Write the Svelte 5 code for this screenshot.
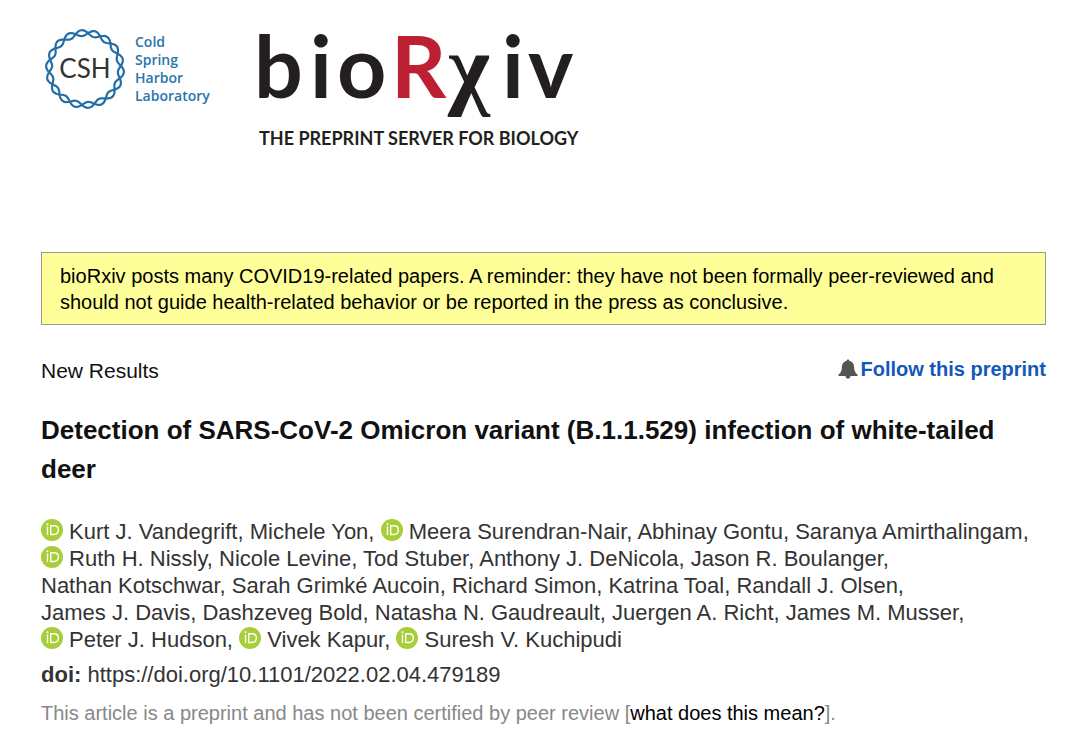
<script lang="ts">
  type Author = { name: string; orcid?: boolean };

  const authors: Author[] = [
    { name: 'Kurt J. Vandegrift', orcid: true },
    { name: 'Michele Yon' },
    { name: 'Meera Surendran-Nair', orcid: true },
    { name: 'Abhinay Gontu' },
    { name: 'Saranya Amirthalingam' },
    { name: 'Ruth H. Nissly', orcid: true },
    { name: 'Nicole Levine' },
    { name: 'Tod Stuber' },
    { name: 'Anthony J. DeNicola' },
    { name: 'Jason R. Boulanger' },
    { name: 'Nathan Kotschwar' },
    { name: 'Sarah Grimké Aucoin' },
    { name: 'Richard Simon' },
    { name: 'Katrina Toal' },
    { name: 'Randall J. Olsen' },
    { name: 'James J. Davis' },
    { name: 'Dashzeveg Bold' },
    { name: 'Natasha N. Gaudreault' },
    { name: 'Juergen A. Richt' },
    { name: 'James M. Musser' },
    { name: 'Peter J. Hudson', orcid: true },
    { name: 'Vivek Kapur', orcid: true },
    { name: 'Suresh V. Kuchipudi', orcid: true }
  ];

  // one strand of the helix ring, phase 0 or PI
  function strand(phase: number) {
    const points: string[] = [];
    for (let deg = 0; deg < 360; deg += 2) {
      const a = (deg * Math.PI) / 180;
      const r = 36 + 3 * Math.sin(a * 9 + phase);
      points.push(`${(41 + r * Math.cos(a)).toFixed(2)},${(41 + r * Math.sin(a)).toFixed(2)}`);
    }
    return points.join(' ');
  }
</script>

<div class="page">
  <header>
    <a class="csh" href="#cshl">
      <svg width="82" height="82" viewBox="0 0 82 82" aria-hidden="true">
        <polygon points={strand(0.8)} />
        <polygon points={strand(0.8 + Math.PI)} />
        <text x="41" y="50" text-anchor="middle">CSH</text>
      </svg>
      <span>Cold<br />Spring<br />Harbor<br />Laboratory</span>
    </a>
    <a class="biorxiv" href="#home" aria-label="bioRxiv">
      <svg width="322" height="124" viewBox="0 0 322 124">
        <g class="wordmark">
          <text x="-3" y="71">b</text>
          <text x="53" y="71">i</text>
          <text x="80" y="71">o</text>
          <text class="red" x="134" y="71">R</text>
          <text class="chi" x="191" y="71">χ</text>
          <text x="245" y="71">i</text>
          <text x="271" y="71">v</text>
        </g>
        <text class="tagline" x="2" y="118">THE PREPRINT SERVER FOR BIOLOGY</text>
      </svg>
    </a>
  </header>

  <main>
    <p class="notice">
      bioRxiv posts many COVID19-related papers. A reminder: they have not been formally peer-reviewed and
      should not guide health-related behavior or be reported in the press as conclusive.
    </p>

    <div class="meta">
      <span>New Results</span>
      <a href="#follow">
        <svg width="20" height="20" viewBox="0 0 20 20" aria-hidden="true">
          <path d="M10 0.5c-1 0-1.5.6-1.4 1.5C5.2 2.7 4 5 3.900 8c-.1 4-1.200 6-3.400 7.500V17h19v-1.500C17.300 14 16.200 12 16.100 8c-.1-3-1.300-5.300-4.700-6 .1-.9-.4-1.500-1.400-1.500zM7.500 17c.3 2 1.200 2.700 2.500 2.700s2.200-.7 2.500-2.700z" />
        </svg>
        Follow this preprint
      </a>
    </div>

    <h1>Detection of SARS-CoV-2 Omicron variant (B.1.1.529) infection of white-tailed deer</h1>

    <p class="authors">
      {#each authors as author, i}
        <span>
          {#if author.orcid}
            <svg width="22" height="22" viewBox="0 0 22 22" role="img" aria-label="ORCID">
              <circle cx="11" cy="11" r="11" />
              <path d="M6.500 7.500v8.500M9.700 6.700h3.300c5.900 0 5.900 8.800 0 8.800h-3.300z" />
              <circle class="dot" cx="6.500" cy="5.200" r="1" />
            </svg>
          {/if}
          {author.name}{i < authors.length - 1 ? ',' : ''}</span>{' '}
      {/each}
    </p>

    <p class="doi"><strong>doi:</strong> https://doi.org/10.1101/2022.02.04.479189</p>
    <p class="note">
      This article is a preprint and has not been certified by peer review [<a href="#about">what does this mean?</a>].
    </p>
  </main>
</div>

<style>
  :global(body) {
    margin: 0;
    background: #fff;
  }

  .page {
    padding: 27px 32px 12px 41px;
    font-family: 'Liberation Sans', Arial, sans-serif;
    color: #333;
  }

  p,
  h1 {
    margin: 0;
  }

  a {
    text-decoration: none;
  }

  header {
    display: flex;
    gap: 44px;
    margin-left: 3px;
  }

  .csh {
    display: flex;
    gap: 9px;
    padding-top: 1px;
    color: #2a75a9;
    font: 600 14px/18px 'Open Sans', sans-serif;
  }

  .csh span {
    min-width: 78px;
    padding-top: 5px;
  }

  .csh polygon {
    fill: none;
    stroke: #236fa5;
    stroke-width: 2.2;
  }

  .csh text {
    fill: #333;
    font: 26px Lato, sans-serif;
  }

  .biorxiv svg {
    display: block;
    overflow: visible;
  }

  .wordmark {
    fill: #231f20;
    font: bold 86px Lato, sans-serif;
  }

  .wordmark .red {
    fill: #be2033;
  }

  .wordmark .chi {
    font: bold 90px 'Liberation Serif', serif;
  }

  .tagline {
    fill: #231f20;
    font: bold 18px Lato, sans-serif;
  }

  .notice {
    margin-top: 101px;
    padding: 10px 18px 9px;
    border: 1px solid #999;
    background: #ff9;
    color: #000;
    font-size: 20px;
    line-height: 26px;
  }

  .meta {
    display: flex;
    align-items: flex-start;
    justify-content: space-between;
    margin-top: 30px;
    color: #111;
    font-size: 21px;
    line-height: 32px;
  }

  .meta a {
    display: flex;
    align-items: center;
    gap: 2px;
    color: #1558b8;
    font-size: 20px;
    font-weight: bold;
    line-height: 28px;
  }

  .meta svg {
    fill: #555;
  }

  h1 {
    margin-top: 24px;
    color: #111;
    font-size: 26px;
    line-height: 39px;
  }

  .authors {
    margin-top: 29px;
    font-size: 22px;
    line-height: 27px;
  }

  .authors span {
    white-space: nowrap;
  }

  .authors svg {
    vertical-align: -2px;
    fill: #a6ce39;
  }

  .authors path {
    fill: none;
    stroke: #fff;
    stroke-width: 1.4;
  }

  .authors .dot {
    fill: #fff;
  }

  .doi {
    margin-top: 8px;
    font-size: 22px;
    line-height: 27px;
  }

  .note {
    margin-top: 12px;
    color: #888;
    font-size: 20px;
    line-height: 26px;
  }

  .note a {
    color: #000;
  }
</style>
